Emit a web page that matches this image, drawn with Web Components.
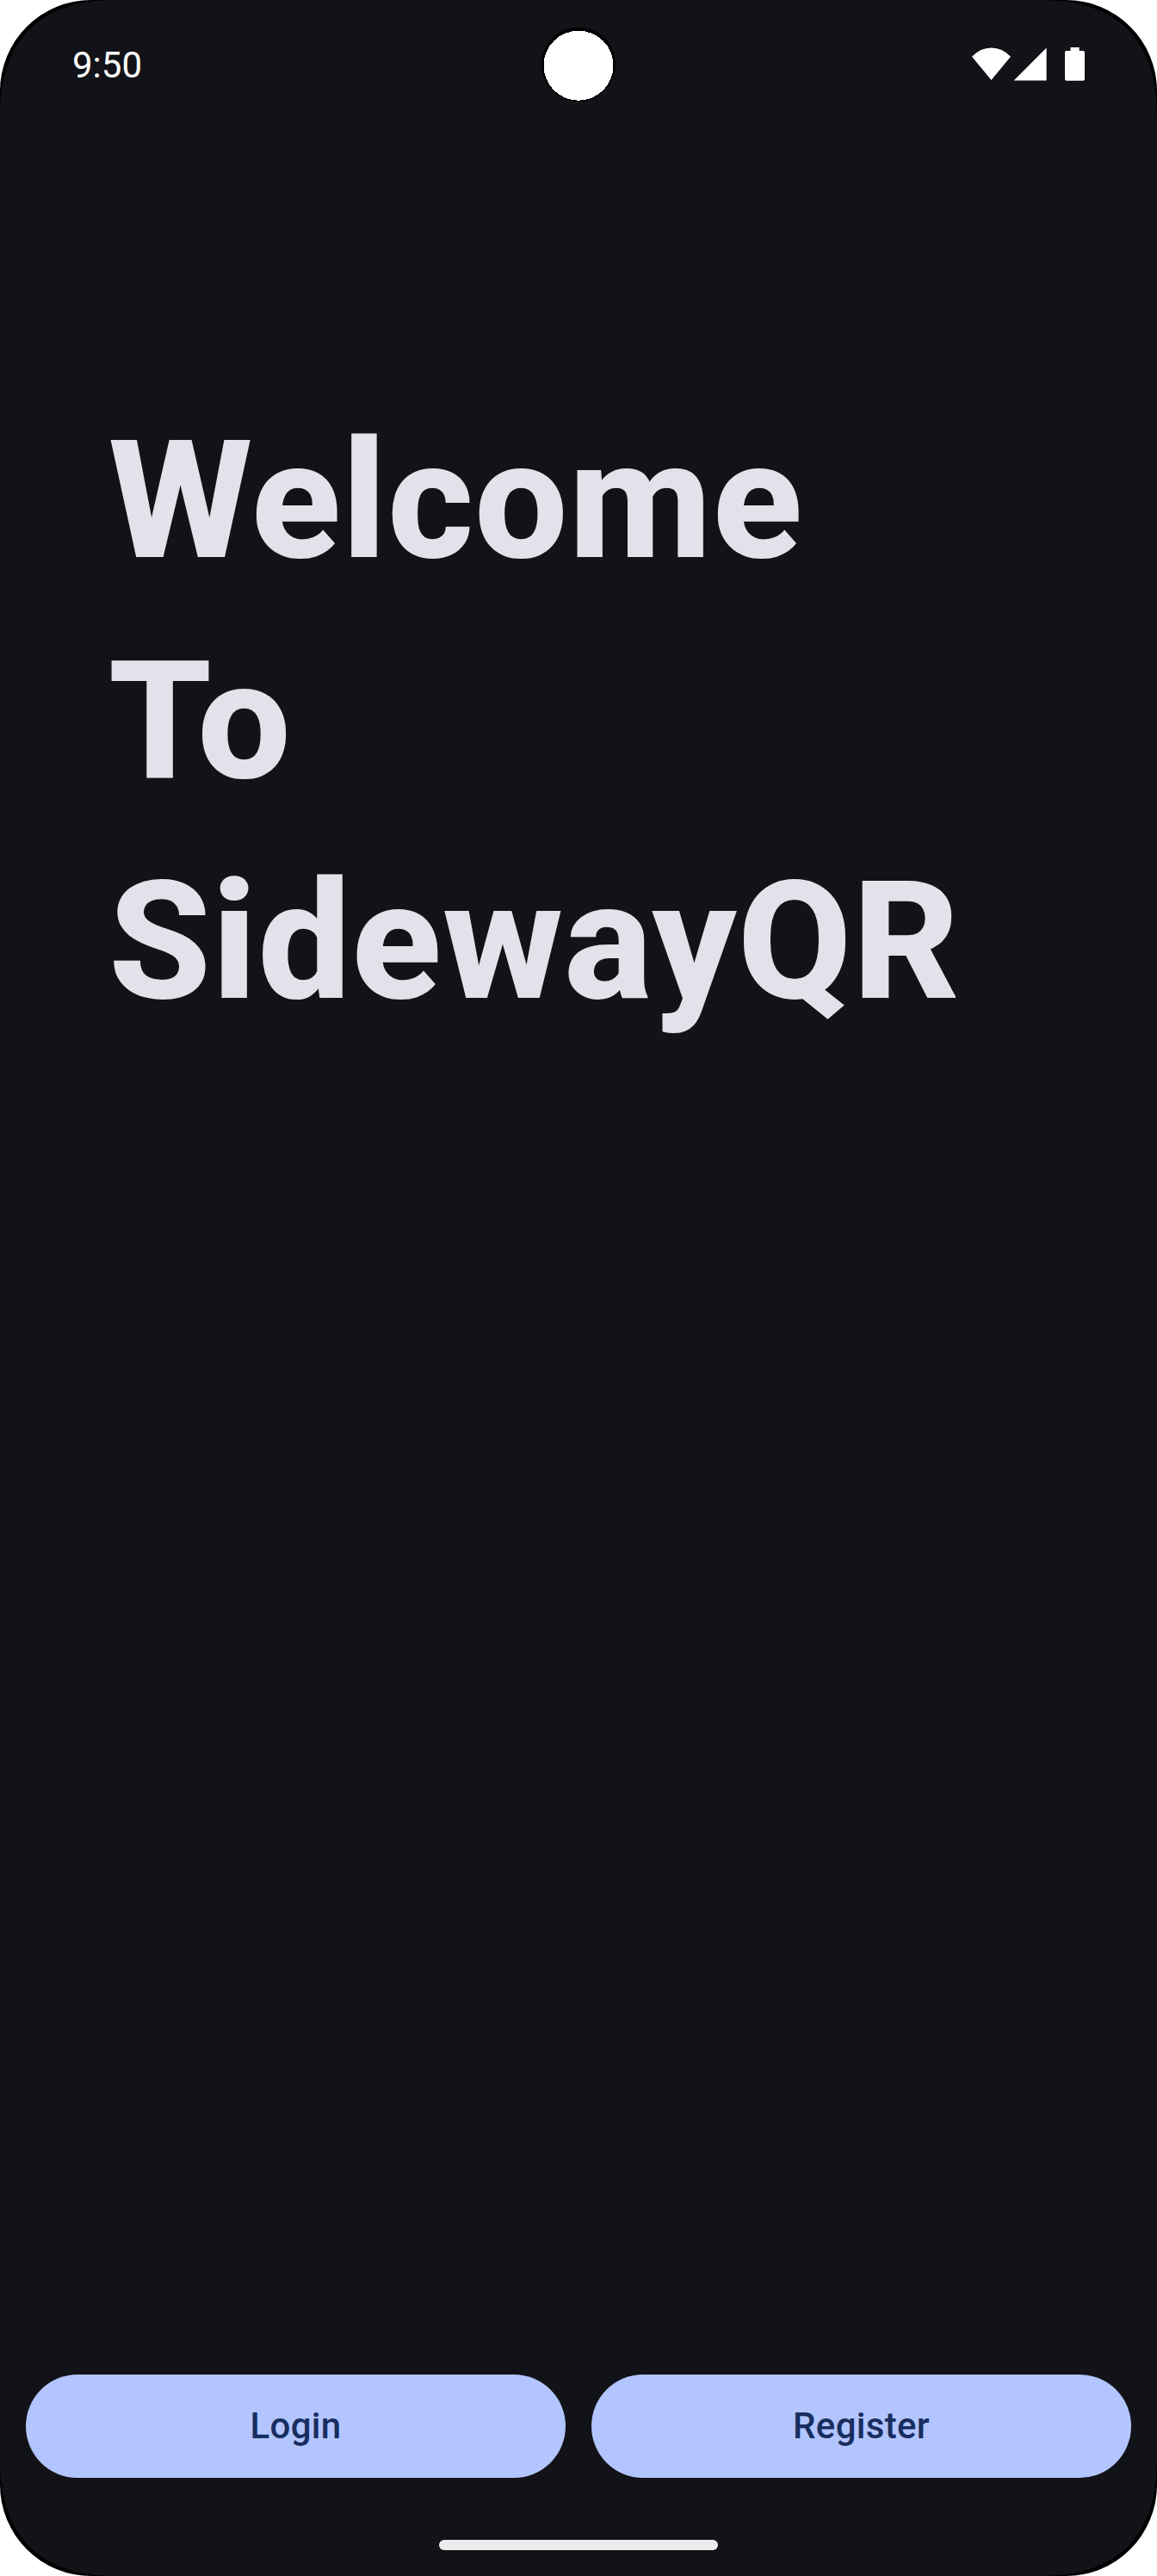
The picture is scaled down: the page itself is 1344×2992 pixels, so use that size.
<!DOCTYPE html>
<html lang="en"><head><meta charset="utf-8"><title>SidewayQR</title>
<style>html,body{margin:0;background:#fff}</style></head><body>
<phone-screen>
<status-bar slot="status" time="9:50"></status-bar>
<welcome-title><span>Welcome</span><span>To</span><span>SidewayQR</span></welcome-title>
<action-row slot="actions"><pill-button>Login</pill-button><pill-button>Register</pill-button></action-row>
<home-indicator slot="nav"></home-indicator>
</phone-screen>
<script>
const define=(name,html)=>customElements.define(name,class extends HTMLElement{
constructor(){super();this.attachShadow({mode:'open'}).innerHTML=html;}
connectedCallback(){const t=this.shadowRoot.querySelector('[data-time]');if(t)t.textContent=this.getAttribute('time');}
});
define('phone-screen',`<style>
:host{display:block;position:relative;width:1344px;height:2992px;font-family:Roboto,"Liberation Sans",sans-serif;background:#fff}
.rim{height:100%;background:#000;border-radius:106px}
.screen{height:100%;background:#121318;display:flex;flex-direction:column;clip-path:path("M0 135C0 46 46 0 135 0H1209C1298 0 1344 46 1344 135V2857C1344 2946 1298 2992 1209 2992H135C46 2992 0 2946 0 2857Z")}
main{flex:1}
</style><div class="rim"><div class="screen"><slot name="status"></slot><main><slot></slot></main><slot name="actions"></slot><slot name="nav"></slot></div></div>`);
define('status-bar',`<style>
:host{display:flex;position:relative;height:150px;box-sizing:border-box;padding:0 84px;align-items:center;justify-content:space-between;color:#fff;flex:none}
time{font-size:42px;line-height:50px;padding-top:2px}
svg{display:block}
.icons{width:132px;height:150px}
.cam{position:absolute;left:628px;top:31px}
</style><time data-time></time>
<svg class="cam" width="88" height="88"><circle cx="44" cy="43.5" r="43" fill="#000"/><circle cx="44" cy="45.2" r="40.5" fill="#fff" shape-rendering="crispEdges"/></svg>
<svg class="icons" viewBox="1128 0 132 150" fill="#fff"><path d="M1129 65.700Q1139 55.500 1151.500 55.500T1174 65.700L1151.500 93Z"/><path d="M1177.700 93.500 1215.600 55.600V93.500Z"/><path d="M1243.500 55H1253.700V59H1258Q1260 59 1260 61V91.700Q1260 93.700 1258 93.700H1239Q1237 93.700 1237 91.700V61Q1237 59 1239 59H1243.500Z"/></svg>`);
define('welcome-title',`<style>
:host{display:flex;flex-direction:column;padding:304px 126px 0;font-size:192px;font-weight:800;line-height:256px;letter-spacing:1.2px;color:#e3e1e9}
</style><slot></slot>`);
define('action-row',`<style>:host{display:flex;gap:30px;padding:0 30px;flex:none}</style><slot></slot>`);
define('pill-button',`<style>
:host{flex:1 1 0;display:block}
button{display:flex;width:100%;height:120px;align-items:center;justify-content:center;border:0;padding:0;border-radius:60px;background:#b3c5ff;color:#182e60;font:500 42px/60px Roboto,"Liberation Sans",sans-serif;letter-spacing:.3px}
</style><button><slot></slot></button>`);
define('home-indicator',`<style>
:host{display:flex;height:114px;box-sizing:border-box;padding-top:72px;justify-content:center;flex:none}
div{width:324px;height:12px;border-radius:6px;background:#ececec}
</style><div></div>`);
</script></body></html>
